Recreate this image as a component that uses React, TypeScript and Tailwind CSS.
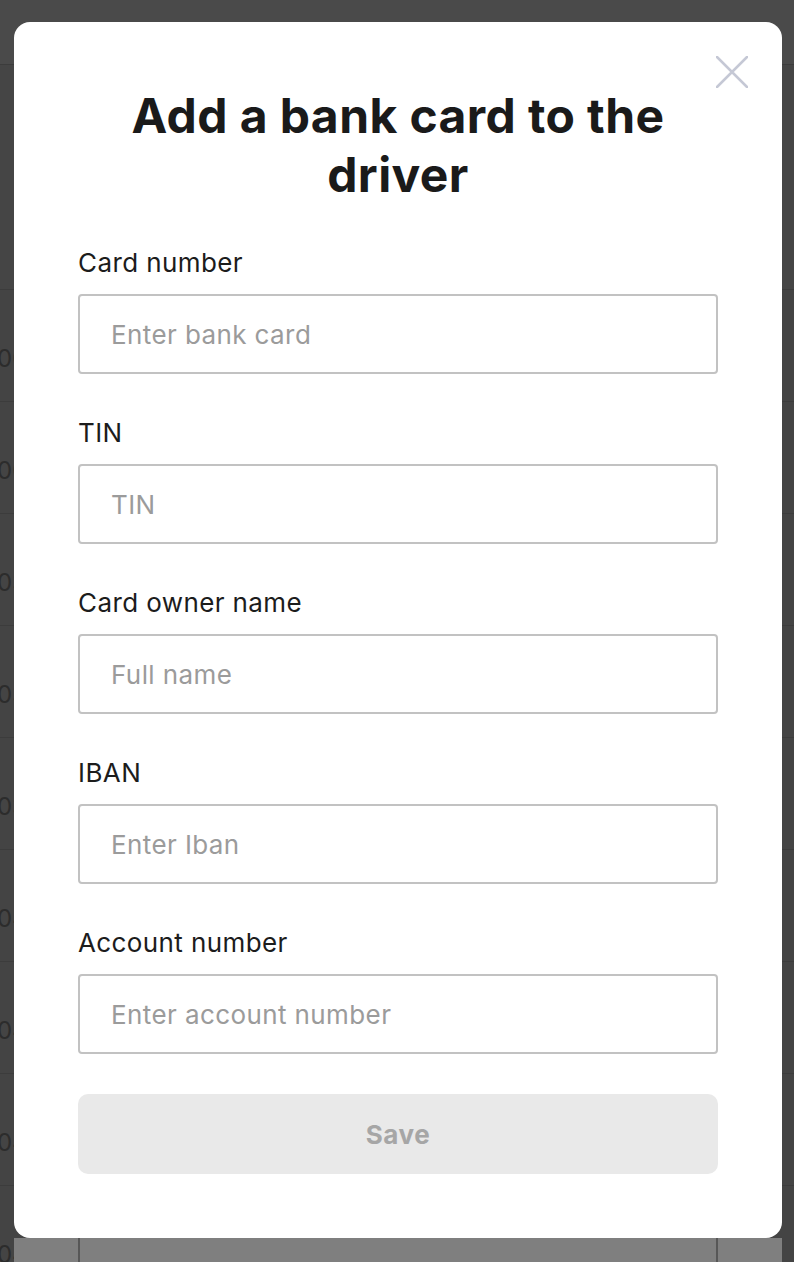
import React from "react";

const fields = [
  { label: "Card number", placeholder: "Enter bank card" },
  { label: "TIN", placeholder: "TIN" },
  { label: "Card owner name", placeholder: "Full name" },
  { label: "IBAN", placeholder: "Enter Iban" },
  { label: "Account number", placeholder: "Enter account number" },
];

const rowDigits = ["00", "00", "03", "03", "03", "04", "04", "04", "04"];

export default function App() {
  return (
    <div
      className="relative w-[794px] h-[1262px] overflow-hidden bg-[#474747]"
      style={{ fontFamily: "Inter, 'Noto Sans', sans-serif" }}
    >
      {/* dimmed page behind */}
      <div className="flex flex-col">
        <div className="h-[65px] border-b border-[#3c3c3c] bg-[#4a4a4a]" />
        <div className="h-[225px] border-b border-[#3c3c3c] bg-[#454545]" />
        {rowDigits.map((d, i) => (
          <div
            key={i}
            className="h-[112px] border-b border-[#3c3c3c] bg-[#444444] flex items-center pt-[26px]"
          >
            <span className="ml-[-3px] text-[24px] leading-[30px] text-[#2c2c2c]">{d}</span>
          </div>
        ))}
      </div>

      {/* lower stacked layer */}
      <div className="absolute left-[14px] top-[1238px] w-[768px] h-[40px] bg-[#7f7f7f]">
        <div className="ml-[64px] w-[640px] h-full border-x-2 border-[#575757]" />
      </div>

      {/* modal */}
      <div className="absolute left-[14px] top-[22px] w-[768px] h-[1216px] bg-white rounded-[16px] px-[64px] pt-[64px]">
        <button className="absolute right-[34px] top-[34px] w-[32px] h-[32px]">
          <svg width="32" height="32" viewBox="0 0 32 32" fill="none">
            <path d="M1 1L31 31M31 1L1 31" stroke="#c5c8d5" strokeWidth="2.5" strokeLinecap="round" />
          </svg>
        </button>
        <h1 className="text-center text-[48px] leading-[59px] font-bold text-[#1a1a1a] tracking-[0.4px] px-[40px]">
          Add a bank card to the driver
        </h1>
        <div className="mt-[44px] flex flex-col gap-[44px]">
          {fields.map((f) => (
            <div key={f.label} className="flex flex-col gap-[16px]">
              <label className="text-[26px] leading-[30px] tracking-[0.4px] text-[#1c1c1c]">{f.label}</label>
              <input
                placeholder={f.placeholder}
                className="h-[80px] w-full rounded-[4px] border-2 border-[#c2c2c2] pl-[31px] text-[26px] tracking-[0.4px] text-[#1c1c1c] placeholder:text-[#9b9b9b] outline-none"
              />
            </div>
          ))}
        </div>
        <button className="mt-[40px] h-[80px] w-full rounded-[10px] bg-[#e9e9e9] text-[26px] tracking-[0.6px] font-bold text-[#a6a6a6]">
          Save
        </button>
      </div>
    </div>
  );
}
